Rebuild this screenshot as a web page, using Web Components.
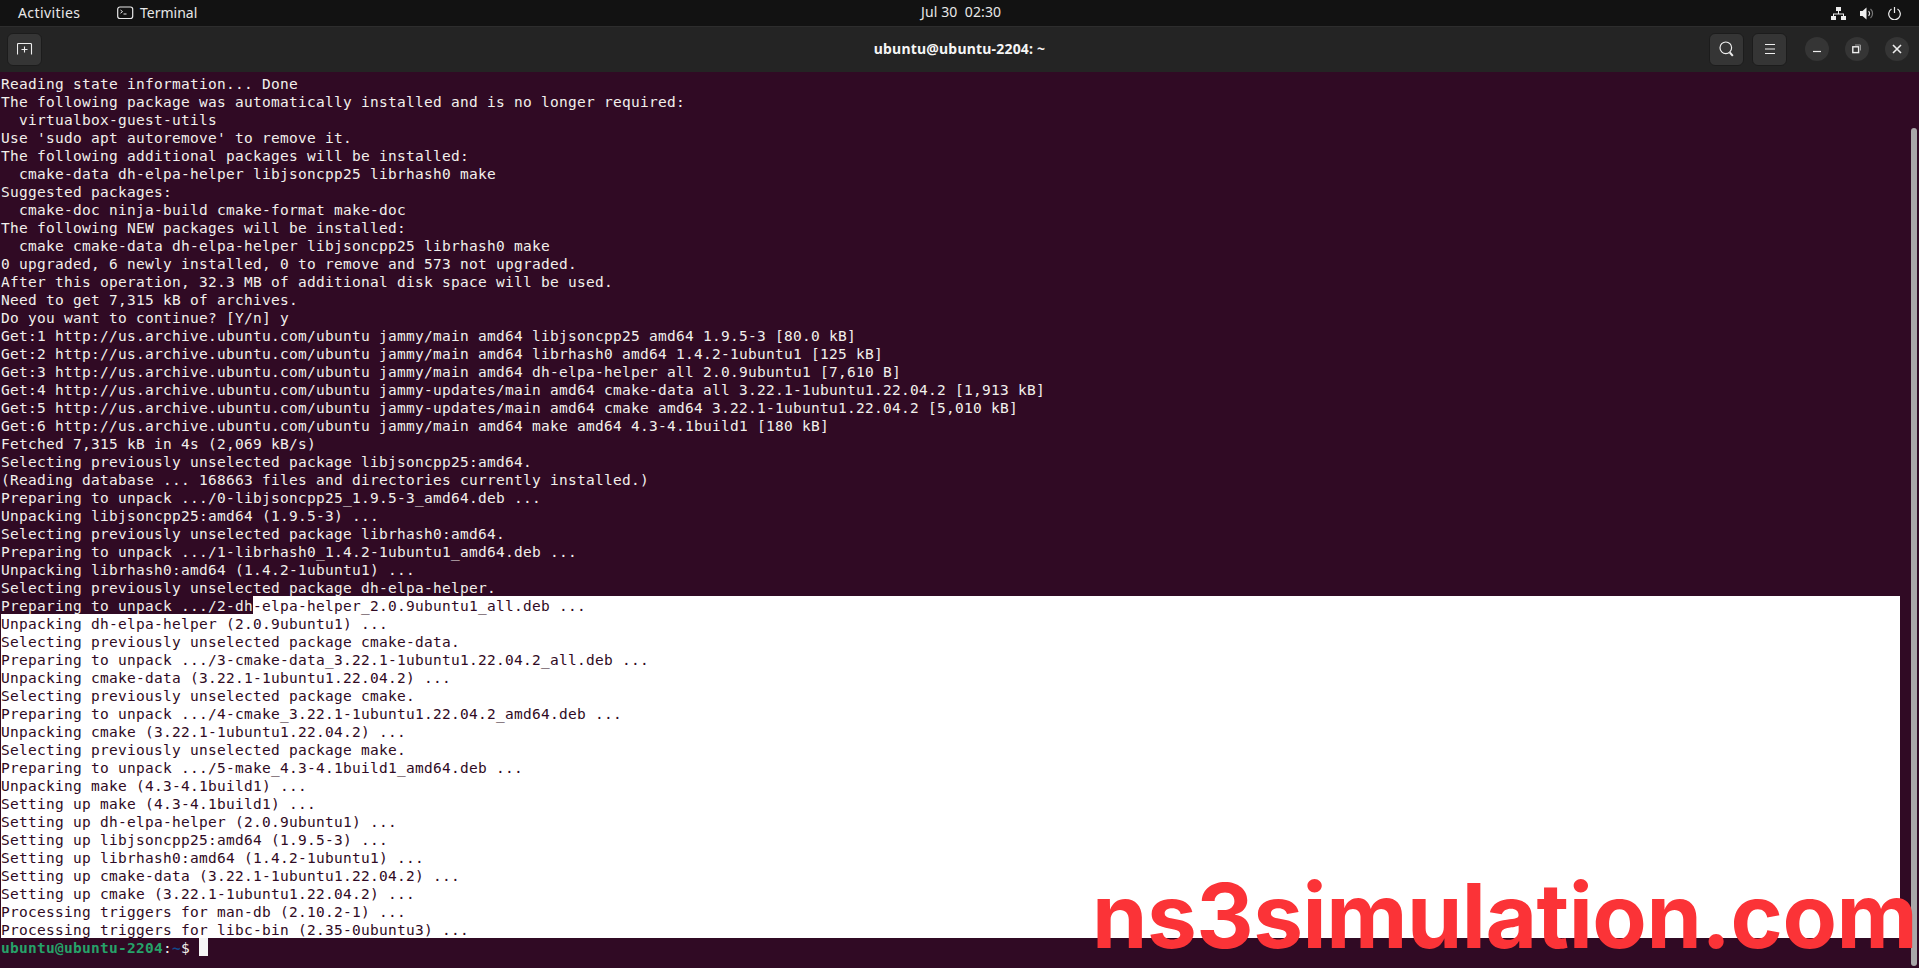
<!DOCTYPE html>
<html><head><meta charset="utf-8"><style>
html,body{margin:0;padding:0;width:1919px;height:968px;overflow:hidden;background:#300a24}
</style></head><body>
<desktop-shell>
<top-bar slot="top"></top-bar>
<title-bar slot="top"></title-bar>
<terminal-view></terminal-view>
</desktop-shell>
<script>
const UI='"Noto Sans","Open Sans",sans-serif';
function def(name,css,html,init){customElements.define(name,class extends HTMLElement{constructor(){super();const r=this.attachShadow({mode:'open'});r.innerHTML='<style>'+css+'</style>'+html;if(init)init(r,this)}})}
def('desktop-shell',':host{display:flex;flex-direction:column;width:1919px;height:968px;position:relative;overflow:hidden;background:#300a24}','<slot name="top"></slot><slot></slot>');
def('top-bar',`:host{display:flex;flex:none;align-items:center;height:26px;background:#121212;color:#e8e8e8;font:14px/18px ${UI};position:relative}
.a{margin-left:18px;width:99px;letter-spacing:.4px}.t{display:flex;align-items:center;gap:6px}
.c{position:absolute;left:921px;top:3px;font-size:14px;white-space:pre;letter-spacing:.1px}
.r{margin-left:auto;margin-right:18px;display:flex;align-items:center;gap:14px}svg{display:block}`,
`<span class="a">Activities</span><span class="t"><svg width="17" height="14" viewBox="0 0 17 14" fill="none" stroke="#e8e8e8"><rect x=".7" y="1" width="15" height="11.5" rx="2.2" stroke-width="1.2"/><path d="M3.5 4l2 1.6-2 1.6M6.5 8h3" stroke-width="1"/></svg><span>Terminal</span></span>
<span class="c">Jul 30  02:30</span>
<span class="r">
<svg width="15" height="13" viewBox="0 0 15 13" fill="#eee"><rect x="5" y="0" width="5" height="4"/><rect x="0" y="9" width="5" height="4"/><rect x="10" y="9" width="5" height="4"/><path d="M7 4h1v2.500h5V9h-1V7.500H3V9H2V6.500h5z"/></svg>
<svg width="14" height="13" viewBox="0 0 14 13" fill="none"><path d="M0 4h2.500L6.500.5v12L2.500 9H0z" fill="#eee"/><path d="M8.500 4.200a3 3 0 010 4.600" stroke="#ddd" stroke-width="1.200"/><path d="M10.500 2a6 6 0 010 9" stroke="#777" stroke-width="1.200"/></svg>
<svg width="13" height="13" viewBox="0 0 13 13" fill="none" stroke="#eee" stroke-width="1.200"><path d="M3.500 2a5.800 5.800 0 106 0M6.500 0v6"/></svg>
</span>`);
def('title-bar',`:host{display:flex;flex:none;align-items:center;height:46px;background:#242424;color:#f5f5f5;position:relative;box-shadow:inset 0 1px #2d2d2d}
.ttl{position:absolute;left:0;right:0;top:13px;text-align:center;font:bold 14px ${UI};letter-spacing:.2px}
.b{width:35px;height:33px;box-sizing:border-box;background:#353535;border:1px solid #1c1c1c;border-radius:6px;display:flex;align-items:center;justify-content:center}
.l{margin-left:7px}.r{margin-left:auto;display:flex;align-items:center;margin-right:10px}
.r .b+.b{margin-left:8px}.w{width:24px;height:24px;border-radius:50%;background:#353535;display:flex;align-items:center;justify-content:center;margin-left:16px}.w.f{margin-left:18px}svg{display:block}`,
`<span class="b l"><svg width="16" height="12" viewBox="0 0 16 12" fill="none" stroke="#eee" stroke-width="1.100"><path d="M.5 11.500V1.500q0-1 1-1h12q1 0 1 1v10M7.500 3.500v6M4.500 6.500h6"/></svg></span>
<span class="ttl">ubuntu@ubuntu-2204: ~</span>
<span class="r">
<span class="b"><svg width="15" height="16" viewBox="0 0 15 16" fill="none" stroke="#eee" stroke-width="1.200"><circle cx="6.800" cy="6.800" r="5.800"/><path d="M10.800 11.500l3 3.300" stroke-width="2"/></svg></span>
<span class="b"><svg width="12" height="10" viewBox="0 0 12 10" stroke="#eee" fill="none"><path d="M1 .5h10M1 5h10M1 9.500h10"/></svg></span>
<span class="w f"><svg width="10" height="10" viewBox="0 0 10 10" stroke="#eee" stroke-width="1.200"><path d="M1 7.500h8"/></svg></span>
<span class="w"><svg width="10" height="10" viewBox="0 0 10 10" fill="none" stroke="#eee"><rect x=".8" y="2.800" width="5.800" height="5.800" stroke-width="1.400"/><path d="M3 1h5.500v5.500" stroke="#999"/></svg></span>
<span class="w"><svg width="10" height="10" viewBox="0 0 10 10" stroke="#eee" stroke-width="1.600"><path d="M1 1l8 8M9 1l-8 8"/></svg></span>
</span>`);
const LINES=`Reading state information... Done
The following package was automatically installed and is no longer required:
  virtualbox-guest-utils
Use 'sudo apt autoremove' to remove it.
The following additional packages will be installed:
  cmake-data dh-elpa-helper libjsoncpp25 librhash0 make
Suggested packages:
  cmake-doc ninja-build cmake-format make-doc
The following NEW packages will be installed:
  cmake cmake-data dh-elpa-helper libjsoncpp25 librhash0 make
0 upgraded, 6 newly installed, 0 to remove and 573 not upgraded.
After this operation, 32.3 MB of additional disk space will be used.
Need to get 7,315 kB of archives.
Do you want to continue? [Y/n] y
Get:1 http://us.archive.ubuntu.com/ubuntu jammy/main amd64 libjsoncpp25 amd64 1.9.5-3 [80.0 kB]
Get:2 http://us.archive.ubuntu.com/ubuntu jammy/main amd64 librhash0 amd64 1.4.2-1ubuntu1 [125 kB]
Get:3 http://us.archive.ubuntu.com/ubuntu jammy/main amd64 dh-elpa-helper all 2.0.9ubuntu1 [7,610 B]
Get:4 http://us.archive.ubuntu.com/ubuntu jammy-updates/main amd64 cmake-data all 3.22.1-1ubuntu1.22.04.2 [1,913 kB]
Get:5 http://us.archive.ubuntu.com/ubuntu jammy-updates/main amd64 cmake amd64 3.22.1-1ubuntu1.22.04.2 [5,010 kB]
Get:6 http://us.archive.ubuntu.com/ubuntu jammy/main amd64 make amd64 4.3-4.1build1 [180 kB]
Fetched 7,315 kB in 4s (2,069 kB/s)
Selecting previously unselected package libjsoncpp25:amd64.
(Reading database ... 168663 files and directories currently installed.)
Preparing to unpack .../0-libjsoncpp25_1.9.5-3_amd64.deb ...
Unpacking libjsoncpp25:amd64 (1.9.5-3) ...
Selecting previously unselected package librhash0:amd64.
Preparing to unpack .../1-librhash0_1.4.2-1ubuntu1_amd64.deb ...
Unpacking librhash0:amd64 (1.4.2-1ubuntu1) ...
Selecting previously unselected package dh-elpa-helper.
Preparing to unpack .../2-dh|-elpa-helper_2.0.9ubuntu1_all.deb ...
Unpacking dh-elpa-helper (2.0.9ubuntu1) ...
Selecting previously unselected package cmake-data.
Preparing to unpack .../3-cmake-data_3.22.1-1ubuntu1.22.04.2_all.deb ...
Unpacking cmake-data (3.22.1-1ubuntu1.22.04.2) ...
Selecting previously unselected package cmake.
Preparing to unpack .../4-cmake_3.22.1-1ubuntu1.22.04.2_amd64.deb ...
Unpacking cmake (3.22.1-1ubuntu1.22.04.2) ...
Selecting previously unselected package make.
Preparing to unpack .../5-make_4.3-4.1build1_amd64.deb ...
Unpacking make (4.3-4.1build1) ...
Setting up make (4.3-4.1build1) ...
Setting up dh-elpa-helper (2.0.9ubuntu1) ...
Setting up libjsoncpp25:amd64 (1.9.5-3) ...
Setting up librhash0:amd64 (1.4.2-1ubuntu1) ...
Setting up cmake-data (3.22.1-1ubuntu1.22.04.2) ...
Setting up cmake (3.22.1-1ubuntu1.22.04.2) ...
Processing triggers for man-db (2.10.2-1) ...
Processing triggers for libc-bin (2.35-0ubuntu3) ...`.split('\n');
def('terminal-view',`:host{display:flex;flex:1;min-height:0;background:#300a24;position:relative;color:#f2f0ec;font:14.5px/20px "DejaVu Sans Mono",monospace}
.body{width:1900px;padding:2px 0 0 1px;box-sizing:border-box}
.ln{height:18px;white-space:pre;letter-spacing:.27px}
.sel{background:#fff;color:#300a24}
.ln.mix{background:linear-gradient(90deg,#300a24 252px,#fff 252px)}.ln.mix b{font-weight:normal;color:#300a24}
.g{color:#26a269;font-weight:bold}.bl{color:#12488b;font-weight:bold}
.cur{display:inline-block;width:9px;height:18px;background:#f5f5f5;vertical-align:top}
.bar{position:absolute;left:1911px;top:56px;width:6px;bottom:2px;border-radius:3px;background:#a9a7a9}
.mark{position:absolute;left:1092px;top:799px;font:bold 89px/1 Inter,sans-serif;color:#fb3337;white-space:nowrap;letter-spacing:-.5px}`,
`<div class="body"></div><div class="bar"></div><span class="mark">ns3simulation.com</span>`,
(r)=>{const b=r.querySelector('.body');let on=false;
LINES.forEach(l=>{const d=document.createElement('div');d.className='ln';
 if(l.includes('|')){const[p,q]=l.split('|');d.classList.add('mix');d.append(p);const s=document.createElement('b');s.textContent=q;d.append(s);on=true}
 else{d.textContent=l;if(on)d.classList.add('sel')}
 b.append(d)});
 const p=document.createElement('div');p.className='ln';p.innerHTML='<span class="g">ubuntu@ubuntu-2204</span>:<span class="bl">~</span>$ <span class="cur"></span>';b.append(p)});
</script></body></html>
